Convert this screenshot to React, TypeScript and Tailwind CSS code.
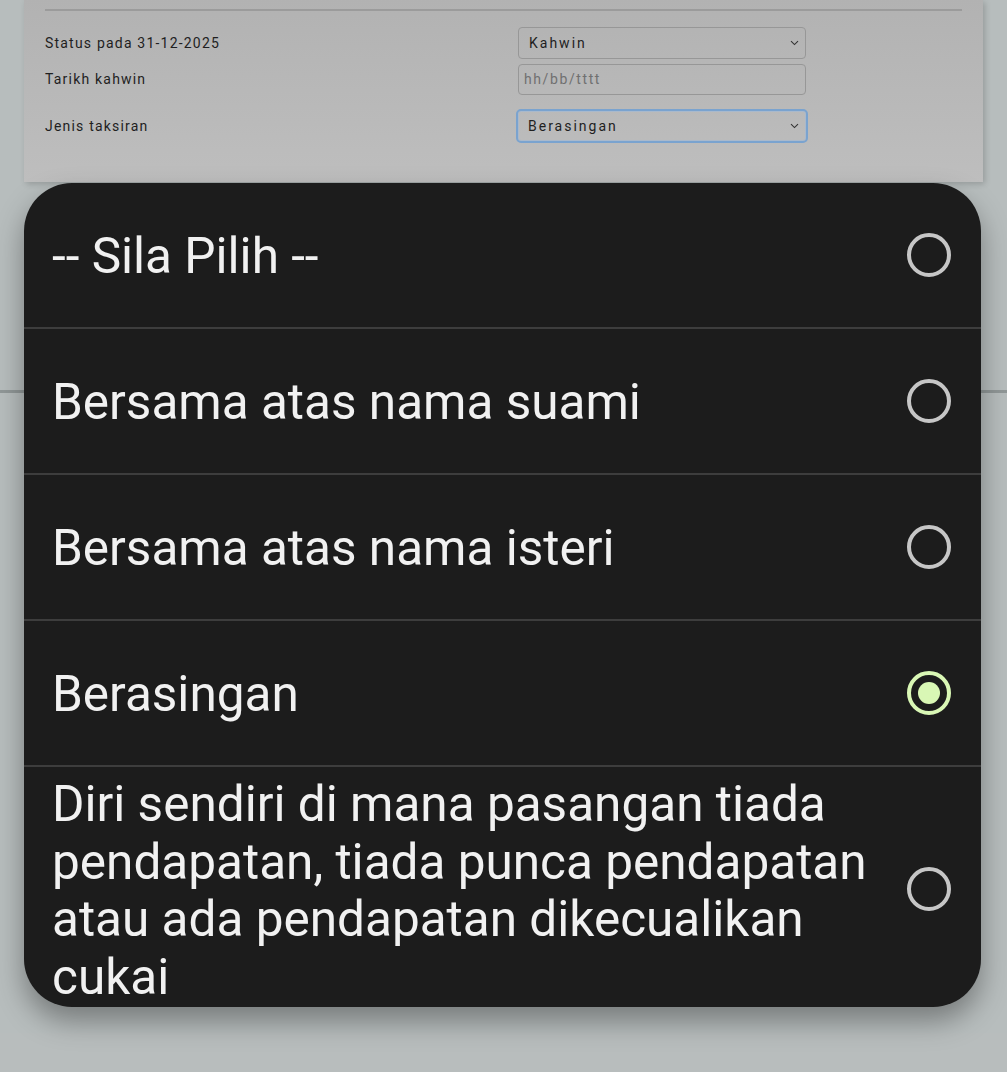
import React from "react";

type Option = {
  label: string;
  selected?: boolean;
};

const options: Option[] = [
  { label: "-- Sila Pilih --" },
  { label: "Bersama atas nama suami" },
  { label: "Bersama atas nama isteri" },
  { label: "Berasingan", selected: true },
  { label: "Diri sendiri di mana pasangan tiada pendapatan, tiada punca pendapatan atau ada pendapatan dikecualikan cukai" },
];

function Chevron() {
  return (
    <svg width="9" height="6" viewBox="0 0 9 6" fill="none" className="shrink-0">
      <path d="M1 1.2 L4.5 4.6 L8 1.2" stroke="#333" strokeWidth="1.1" />
    </svg>
  );
}

function Radio({ selected }: { selected?: boolean }) {
  if (selected) {
    return (
      <span className="flex h-[44px] w-[44px] shrink-0 items-center justify-center rounded-full border-[4px] border-[#d9f7b5]">
        <span className="h-[22px] w-[22px] rounded-full bg-[#d9f7b5]" />
      </span>
    );
  }
  return <span className="h-[44px] w-[44px] shrink-0 rounded-full border-[4px] border-[#c6c6c6]" />;
}

function OptionRow({ label, selected, first }: Option & { first: boolean }) {
  return (
    <div
      className={`flex items-center gap-[30px] py-[5px] pl-[28px] pr-[30px] ${
        first ? "min-h-[144px]" : "min-h-[146px] border-t-2 border-[#3d3d3d]"
      }`}
    >
      <span className="flex-1 pt-[4px] text-[49.5px] leading-[57.5px] text-[#f1f1f1]">{label}</span>
      <Radio selected={selected} />
    </div>
  );
}

export default function App() {
  return (
    <div
      className="relative h-[1072px] w-[1007px] overflow-hidden bg-[#b7bdbd]"
      style={{ fontFamily: "Roboto, 'Noto Sans', sans-serif" }}
    >
      {/* dimmed form card behind the picker */}
      <div className="mx-[24px] h-[182px] bg-gradient-to-b from-[#b2b2b2] to-[#bebebe] px-[21px] pt-[9px] shadow-[2px_2px_6px_rgba(0,0,0,0.18)]">
        <div className="h-[2px] bg-[#9b9b9b]" />
        <div className="mt-[16px] grid grid-cols-[473px_288px] items-center gap-y-[5px] text-[14px] tracking-[1.2px] text-[#1f1f1f]">
          <span>Status pada 31-12-2025</span>
          <div className="flex h-[32px] items-center justify-between rounded-[4px] border border-[#979797] pl-[10px] pr-[6px] text-[14px] tracking-[2px]">
            Kahwin
            <Chevron />
          </div>
          <span>Tarikh kahwin</span>
          <div className="flex h-[31px] items-center rounded-[4px] border border-[#979797] px-[5px] text-[14px] tracking-[1.6px] text-[#707070]">
            hh/bb/tttt
          </div>
          <span className="mt-[9px]">Jenis taksiran</span>
          <div className="mt-[9px] -ml-[2px] flex h-[34px] w-[292px] items-center justify-between rounded-[5px] border-[2px] border-[#7aa3cf] pl-[10px] pr-[7px] text-[14px] tracking-[2px] shadow-[inset_0_0_0_1px_#a9b9cc]">
            Berasingan
            <Chevron />
          </div>
        </div>
      </div>

      {/* page continues beneath the overlay */}
      <div className="mt-[208px] h-[3px] bg-[#909797]" />
      <div className="mt-[640px] h-[40px] bg-[#b8bdbd]" />

      {/* option picker */}
      <div className="absolute left-[24px] top-[183px] h-[824px] w-[957px] overflow-hidden rounded-[48px] bg-[#1c1c1c] shadow-[0_14px_28px_rgba(0,0,0,0.35)]">
        {options.map((o, i) => (
          <OptionRow key={o.label} {...o} first={i === 0} />
        ))}
      </div>
    </div>
  );
}
